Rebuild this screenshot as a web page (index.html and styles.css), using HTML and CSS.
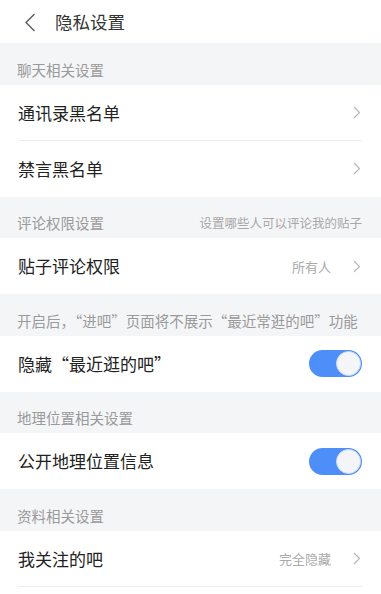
FILE: index.html
```html
<!DOCTYPE html>
<html lang="zh">
<head>
<meta charset="utf-8">
<link rel="stylesheet" href="styles.css">
</head>
<body>
<div class="page">
  <header class="topbar">
    <svg class="back" width="12" height="19" viewBox="0 0 12 19"><path d="M10.5 1 L2 9.5 L10.5 18" fill="none" stroke="#555" stroke-width="1.3"/></svg>
    <div class="title">隐私设置</div>
  </header>

  <div class="section"><span>聊天相关设置</span></div>
  <div class="row sep"><span class="label">通讯录黑名单</span><span class="right"><svg class="chev" width="8" height="13" viewBox="0 0 8 13"><path d="M1 1 L6.5 6.5 L1 12" fill="none" stroke="#b8b8b8" stroke-width="1.2"/></svg></span></div>
  <div class="row"><span class="label">禁言黑名单</span><span class="right"><svg class="chev" width="8" height="13" viewBox="0 0 8 13"><path d="M1 1 L6.5 6.5 L1 12" fill="none" stroke="#b8b8b8" stroke-width="1.2"/></svg></span></div>

  <div class="section"><span>评论权限设置</span><span class="hint">设置哪些人可以评论我的贴子</span></div>
  <div class="row"><span class="label">贴子评论权限</span><span class="right"><span class="value">所有人</span><svg class="chev" width="8" height="13" viewBox="0 0 8 13"><path d="M1 1 L6.5 6.5 L1 12" fill="none" stroke="#b8b8b8" stroke-width="1.2"/></svg></span></div>

  <div class="section"><span>开启后，“进吧”页面将不展示“最近常逛的吧”功能</span></div>
  <div class="row"><span class="label">隐藏“最近逛的吧”</span><span class="toggle"><span class="knob"></span></span></div>

  <div class="section"><span>地理位置相关设置</span></div>
  <div class="row"><span class="label">公开地理位置信息</span><span class="toggle"><span class="knob"></span></span></div>

  <div class="section"><span>资料相关设置</span></div>
  <div class="row sep"><span class="label">我关注的吧</span><span class="right"><span class="value">完全隐藏</span><svg class="chev" width="8" height="13" viewBox="0 0 8 13"><path d="M1 1 L6.5 6.5 L1 12" fill="none" stroke="#b8b8b8" stroke-width="1.2"/></svg></span></div>
</div>
</body>
</html>
```

FILE: styles.css
```css
html, body {
  margin: 0;
  padding: 0;
  background: #fff;
}
body {
  font-family: "Noto Sans CJK SC", "Noto Sans", sans-serif;
  color: #222;
}
.page {
  width: 381px;
  overflow: hidden;
}
.topbar {
  height: 43px;
  display: flex;
  align-items: center;
  background: #fff;
}
.back {
  margin-left: 24px;
  margin-top: 1px;
}
.title {
  margin-left: 19px;
  font-size: 17.5px;
  color: #333;
  line-height: 20px;
}
.section {
  height: 41.5px;
  box-sizing: border-box;
  background: #f4f5f7;
  display: flex;
  align-items: flex-end;
  justify-content: space-between;
  padding: 0 19px 6px 17px;
  font-size: 14.5px;
  line-height: 18px;
  color: #9a9a9a;
}
.section .hint {
  font-size: 12.5px;
  color: #a8a8a8;
  line-height: 18px;
}
.row {
  height: 56px;
  box-sizing: border-box;
  display: flex;
  align-items: center;
  justify-content: space-between;
  padding: 0 19px 0 18px;
  position: relative;
}
.row.sep::after {
  content: "";
  position: absolute;
  left: 18px;
  right: 19px;
  bottom: 0;
  height: 1px;
  background: #ededed;
}
.label {
  font-size: 17px;
  line-height: 22px;
  color: #222;
}
.right {
  display: flex;
  align-items: center;
}
.value {
  font-size: 13px;
  color: #aaa;
  margin-right: 22px;
}
.chev {
  display: block;
  margin-right: 1px;
}
.toggle {
  width: 53px;
  height: 27px;
  border-radius: 14px;
  background: #4d8ef8;
  display: flex;
  align-items: center;
  justify-content: flex-end;
  padding: 0 1px;
  box-sizing: border-box;
}
.knob {
  width: 25px;
  height: 25px;
  border-radius: 50%;
  background: #f4f5f8;
  box-sizing: border-box;
  border: 1px solid #c9d8f2;
}
```
